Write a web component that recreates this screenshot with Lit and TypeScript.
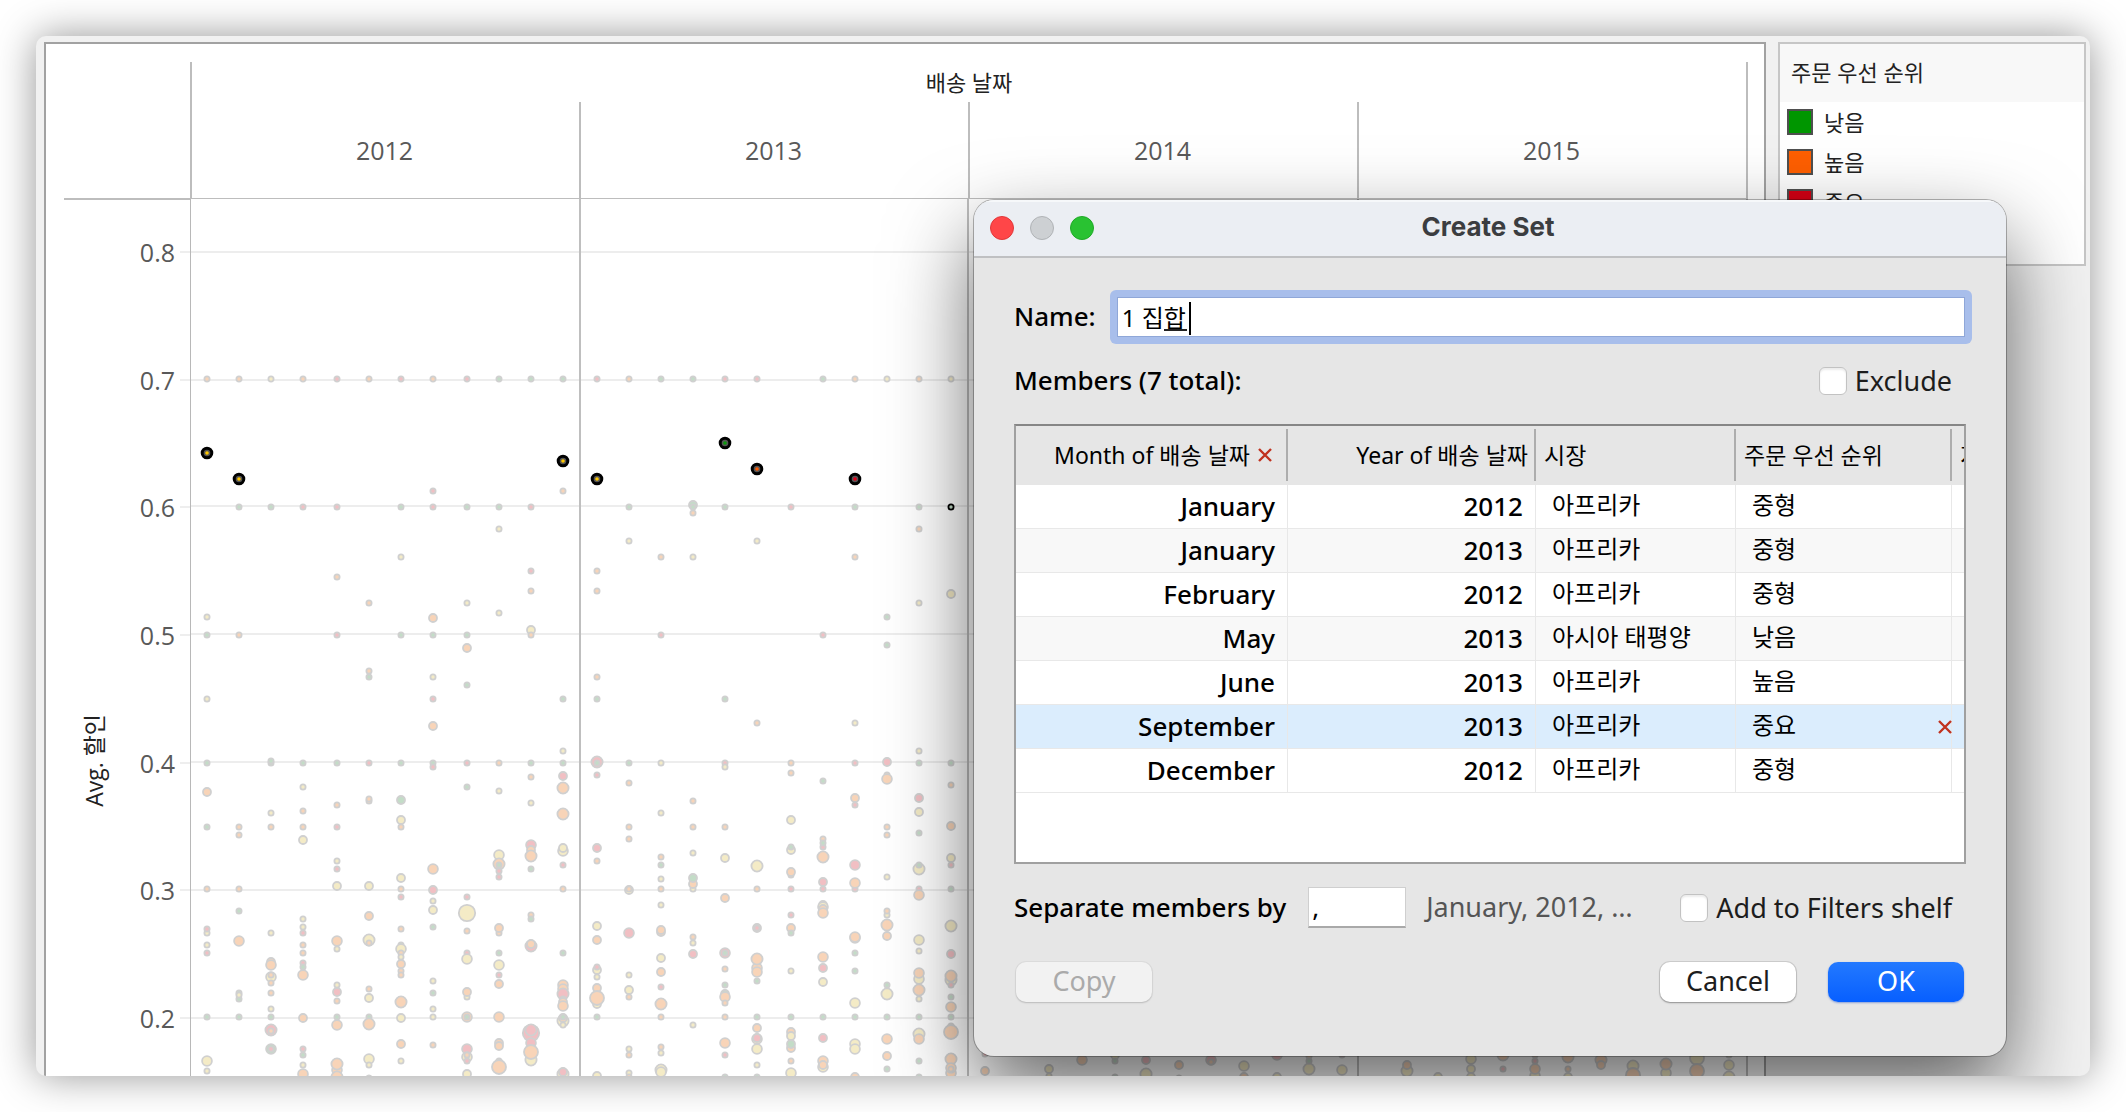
import { LitElement, html, svg, css } from "lit";
import { customElement, state } from "lit/decorators.js";
import { classMap } from "lit/directives/class-map.js";

const PLOT_WIDTH = 1558;
const PLOT_LEFT = 190;
const PLOT_TOP = 199;

const px = (x: number) => `${(((x - PLOT_LEFT) / PLOT_WIDTH) * 100).toFixed(3)}%`;
const py = (y: number) => y - PLOT_TOP;

const FILL: Record<string, string> = { g: "#c3dcc7", r: "#f1bfc3", o: "#f8d4b8", y: "#f4ebc6" };
const STRONG: Record<string, string> = { g: "#0c9a0c", r: "#e3001b", o: "#ff5a00", y: "#ffc800" };
const RADIUS: Record<string, number> = { a: 2.6, b: 4, c: 4.9, d: 5.6, e: 7, f: 8.2 };

/* Marks by month column: level, colour of the priority, size step. */
const MARKS: Record<number, string> = {
  207: "379o 617y 635g 699y 763g 792ob 827g 889o 933y 929r 945y 953r 1017g 1061yc 1071y",
  239: "379o 507g 635o 827o 835o 889o 911g 941oc 993g 999g 995y 1017g",
  271: "379y 507g 763g 761g 813y 827o 933y 962ob 965oc 977yc 975o 983o 993o 1009y 1017g 1030rd 1031o 1049gc 1049r",
  303: "379o 507r 763g 787y 811o 827o 840yb 919y 927y 933r 945o 953o 963r 967g 975oc 1018ob 1049r 1055g 1065y 1074oc",
  337: "379r 507r 577o 635r 763g 805o 827r 861y 869r 886yb 941oc 949y 985y 992rb 1001o 1017g 1025oc 1070oc 1064od 1077od",
  369: "379o 603o 671o 677g 763r 801o 799o 886yb 916ob 940yd 943o 989o 998yb 1017g 1024od 1059yc 1065y 1078y",
  401: "379r 507g 557y 635g 763g 800gb 820yb 827o 878yb 889o 897r 929o 945g 949yc 953o 957y 964ob 971o 975o 1002od 1018yb 1044ob 1061y",
  433: "379o 491r 507r 618ob 635g 677y 699r 726ob 763g 767r 869oc 890rb 901y 910yb 927g 981y 993g 1009y 1017y 1045o",
  467: "379r 507g 603y 635g 648ob 685g 763r 787g 897r 913yf 931o 953r 959yc 997y 992ob 1017oc 1017g 1049rc 1057yc 1055o 1061r 1074yb",
  499: "379g 507g 529y 613y 763o 791y 855yc 864od 865g 871r 877r 933o 928ob 953g 965yc 975r 984ob 1017oc 1043ob 1046ob 1061y 1067oe",
  531: "379g 507r 571r 591o 630yb 635o 763g 777o 803y 845rc 850ob 856od 869g 915o 919g 946rd 944ob 1033rf 1030rd 1043rc 1060yd 1052oe",
  563: "379g 491o 699g 751y 763g 776rb 788od 814od 851yc 848yb 865r 889o 953g 985oc 989oc 994rd 999o 1002ob 1006oc 1021yd 1018ob 1017g 1025y 1074yd 1072rb",
  597: "379r 571o 591o 677o 699g 762rd 763g 775r 848rb 861o 926yb 940ob 970yb 967r 977y 988ob 1004yb 998oe 1017g 1076yb",
  629: "379o 507g 541y 763g 783o 827o 839o 890yb 889o 933rc 975y 990yb 997o 1049y 1055o 1073y 1077o",
  661: "379g 557o 635r 763y 813y 857o 865g 879y 889o 905y 932ob 930ob 958yb 972ob 987r 1004od 1017o 1047o 1053y 1070yd 1072yc",
  693: "379g 505gb 507g 513o 557y 801o 827o 853y 889y 884ob 878gb 937o 943y 954rb 1025y",
  725: "379r 507g 699g 763r 767y 827o 858yb 898ob 953rc 953g 969o 985g 994gb 997oc 1003o 1017o 1043oc 1055r 1077g",
  757: "379r 541y 723o 866yd 889o 928yb 928r 968oc 959od 972oc 981g 1017g 1028ob 1039yc 1038rb 1049yc 1065y 1077g",
  791: "507r 763o 773o 820yb 850yb 847g 875o 872ob 889r 915r 928ob 933g 971y 1017g 1032ob 1036yb 1048ob 1044gb 1061o 1073yc",
  823: "379g 635r 781g 839o 847r 843g 857od 882rb 889r 905yb 907yc 909ob 913oc 957oc 968rb 982yb 1017g 1038rb 1061oc 1067yc 1065ob",
  855: "379o 507g 557o 723y 763r 798ob 805r 865rc 889r 883oc 938oc 937oc 953g 971g 1003yc 1017g 1044yc 1049yc 1077ob",
  887: "379y 617g 645g 762rb 775o 779oc 827o 835o 877y 915y 911o 925od 936ob 985g 994yd 1017g 1039oc 1056ob 1069g",
  919: "379o 507g 529o 603y 751y 763g 798rb 812yb 833g 869yd 865g 889r 895oc 940yc 951y 979yc 973oc 990od 999y 1017g 1034yd 1039oc 1061g 1077g",
  951: "379y 594yb 763g 785o 826ob 858yb 865r 889g 926yd 954rb 980yd 976od 985r 997g 1007oc 1017g 1026g 1032oe 1059od 1073oc 1068oc 1069o",
  985: "1054r 1071ob",
  1049: "1076y 1069yb",
  1082: "1060oc",
  1115: "1055yb 1061g 1077g",
  1146: "1060rb 1074yd",
  1179: "1065ob 1078g",
  1211: "1060rc 1062o",
  1244: "1077ob 1066yc",
  1277: "1055rc 1077yb",
  1309: "1056o 1069yd 1061g",
  1342: "1055r 1070yc",
  1407: "1071yd 1065ob",
  1438: "1077yb",
  1471: "1059yc 1077yb 1069yb",
  1503: "1055od 1069r",
  1535: "1055o 1061r 1076yc 1069oc",
  1568: "1057od 1069o 1077yb",
  1601: "1060od 1065ob",
  1633: "1066yd 1075oe",
  1666: "1073yc 1064od",
  1697: "1058ye 1071oe",
  1729: "1055y 1077yd 1065yc",
};

const SELECTED: [number, number, string][] = [
  [207, 453, "y"],
  [239, 479, "y"],
  [563, 461, "y"],
  [597, 479, "y"],
  [725, 443, "g"],
  [757, 469, "o"],
  [855, 479, "r"],
];

const GRID = [252, 380, 506, 634, 762, 890, 1018];
const TICKS = ["0.8", "0.7", "0.6", "0.5", "0.4", "0.3", "0.2"];
const YEARS = ["2012", "2013", "2014", "2015"];

const PRIORITIES = [
  { name: "낮음", tone: "low" },
  { name: "높음", tone: "high" },
  { name: "중요", tone: "critical" },
];

const MEMBERS = [
  ["January", "2012", "아프리카", "중형"],
  ["January", "2013", "아프리카", "중형"],
  ["February", "2012", "아프리카", "중형"],
  ["May", "2013", "아시아 태평양", "낮음"],
  ["June", "2013", "아프리카", "높음"],
  ["September", "2013", "아프리카", "중요"],
  ["December", "2012", "아프리카", "중형"],
];

const cross = html`<svg class="cross" width="14" height="14" viewBox="0 0 14 14" aria-hidden="true">
  <path d="M1 1L13 13M13 1L1 13" fill="none" stroke="#c0321f" stroke-width="2.4" />
</svg>`;

@customElement("scatter-plot")
export class ScatterPlot extends LitElement {
  static styles = css`
    :host {
      display: block;
      min-width: 0;
      min-height: 0;
      overflow: hidden;
    }
    .plot {
      display: block;
      width: 100%;
      height: 100%;
    }
  `;

  render() {
    return html`<svg class="plot" role="img" aria-label="Avg. 할인">
      ${GRID.map((y) => svg`<rect x="0" y=${py(y) - 1} width="99.9%" height="2" fill="#ededed"></rect>`)}
      <rect x="0" y="0" width="1" height="100%" fill="#b8b8b8"></rect>
      ${[579, 967, 1357, 1746].map((x) => svg`<rect x=${px(x)} y="0" width="2" height="100%" fill="#bfbfbf"></rect>`)}
      ${Object.entries(MARKS).map(([x, list]) =>
        list.split(" ").map((mark) => {
          const [, y, tone, size] = mark.match(/^(\d+)([groy])([a-f]?)$/)!;
          return svg`<circle cx=${px(+x)} cy=${py(+y)} r=${RADIUS[size || "a"]}
            fill=${FILL[tone]} stroke="#d0d0d0" stroke-width="1.8"></circle>`;
        })
      )}
      ${SELECTED.map(
        ([x, y, tone]) => svg`
          <circle cx=${px(x)} cy=${py(y)} r="4.8" fill="#555" stroke="#000" stroke-width="3"></circle>
          <circle cx=${px(x)} cy=${py(y)} r="1.8" fill=${STRONG[tone]}></circle>`
      )}
      <circle cx=${px(951)} cy=${py(507)} r="2.6" fill="#c3dcc7" stroke="#000" stroke-width="1.8"></circle>
    </svg>`;
  }
}

@customElement("create-set-dialog")
export class CreateSetDialog extends LitElement {
  static styles = css`
    :host {
      display: flex;
      flex-direction: column;
      box-sizing: border-box;
      border-radius: 20px;
      overflow: hidden;
      background: #e6e6e6;
      box-shadow: 0 0 0 1px rgba(0, 0, 0, 0.28), 0 36px 84px rgba(0, 0, 0, 0.6);
      font-family: "Noto Sans", "Noto Sans CJK KR", sans-serif;
      font-size: 26px;
      line-height: 36px;
      color: #000;
    }
    input,
    button {
      font: inherit;
      color: inherit;
      margin: 0;
      padding: 0;
      box-sizing: border-box;
      border: 0;
    }
    .titlebar {
      display: grid;
      grid-template-columns: 1fr auto 1fr;
      align-items: center;
      height: 58px;
      box-sizing: border-box;
      padding: 0 20px 0 16px;
      background: #ebeef3;
      border-bottom: 2px solid #bfc0c2;
      box-shadow: inset 0 2px 0 #f6f8fa;
    }
    .lights {
      display: flex;
      gap: 16px;
    }
    .light {
      width: 24px;
      height: 24px;
      border-radius: 50%;
    }
    .light.close {
      background: #ff4648;
      border: 1px solid #e0383a;
    }
    .light.minimize {
      background: #cdd0d3;
      border: 1px solid #b0b3b6;
    }
    .light.zoom {
      background: #29c232;
      border: 1px solid #1faa27;
    }
    .title {
      margin: 0;
      padding-bottom: 2px;
      font-family: Inter, sans-serif;
      font-size: 26px;
      font-weight: 700;
      line-height: 36px;
      color: #3b3d40;
    }
    .body {
      display: flex;
      flex-direction: column;
      padding: 32px 40px 54px;
    }
    .row {
      display: flex;
      align-items: center;
    }
    .name-row {
      gap: 14px;
      margin-right: -6px;
    }
    .name-box {
      position: relative;
      flex: 1;
      display: flex;
      padding: 8px;
      border-radius: 6px;
      background: #a8beeb;
    }
    .name-input {
      width: 100%;
      height: 38px;
      padding: 0 4px 2px;
      font-size: 24px;
      background: #fff;
      box-shadow: 0 0 0 1px #8fa7d8;
      outline: none;
    }
    .composing {
      position: absolute;
      left: 54px;
      top: 39px;
      width: 23px;
      height: 2px;
      background: #222;
    }
    .caret {
      position: absolute;
      left: 79px;
      top: 12px;
      width: 2px;
      height: 33px;
      background: #000;
    }
    .members-row {
      justify-content: space-between;
      margin-top: 18px;
      padding-right: 14px;
    }
    .check {
      display: flex;
      align-items: center;
      gap: 8px;
      font-size: 27px;
      color: #1d1d1d;
    }
    .box {
      appearance: none;
      width: 28px;
      height: 28px;
      border: 1px solid #c2c2c2;
      border-radius: 6px;
      background: #fff;
      box-shadow: inset 0 2px 2px rgba(0, 0, 0, 0.08);
    }
    .grid-box {
      height: 436px;
      margin-top: 24px;
      border: 2px solid #a0a0a0;
      border-top-color: #868686;
      background: #fff;
      overflow: hidden;
    }
    .grid {
      width: 100%;
      table-layout: fixed;
      border-collapse: separate;
      border-spacing: 0;
    }
    .col-month {
      width: 272px;
    }
    .col-year {
      width: 248px;
    }
    .col-market {
      width: 200px;
    }
    .col-priority {
      width: 216px;
    }
    th {
      height: 59px;
      box-sizing: border-box;
      padding: 0 8px 2px;
      font-size: 23px;
      font-weight: 400;
      text-align: left;
      white-space: nowrap;
      background: linear-gradient(#adadad, #adadad) right 3px / 2px 52px no-repeat #e6e6e6;
    }
    th.last {
      background: #e6e6e6;
      overflow: hidden;
      text-overflow: clip;
      padding-right: 0;
    }
    .num {
      text-align: right;
    }
    .head {
      display: inline-flex;
      align-items: center;
      gap: 8px;
    }
    .head-month {
      padding-right: 8px;
    }
    .remove {
      display: inline-flex;
      background: none;
    }
    td {
      position: relative;
      height: 44px;
      box-sizing: border-box;
      padding: 0 12px 2px 16px;
      font-weight: 500;
      white-space: nowrap;
      border-right: 1px solid #e8e8e8;
      border-bottom: 1px solid #e8e8e8;
    }
    td.korean {
      padding-bottom: 3px;
      font-size: 24px;
      font-weight: 400;
    }
    td:last-child {
      border-right: 0;
    }
    tr.alt td {
      background: #f8f8f8;
    }
    tr.current td {
      background: #dbedfd;
    }
    td .remove {
      position: absolute;
      right: -1px;
      top: 15px;
      z-index: 1;
    }
    .strong {
      padding-bottom: 2px;
      font-weight: 500;
    }
    .separator-row {
      margin-top: 23px;
      padding-right: 14px;
      white-space: nowrap;
    }
    .separator {
      width: 98px;
      height: 41px;
      margin-left: 22px;
      padding: 0 3px;
      border: 1px solid #cfcfcf;
      border-bottom: 2px solid #a9a9a9;
      background: #fff;
    }
    .sample {
      margin-left: 20px;
      padding-bottom: 2px;
      font-size: 27px;
      color: #555;
    }
    .push {
      margin-left: auto;
    }
    .actions {
      gap: 32px;
      margin-top: 34px;
      padding: 0 2px;
    }
    .action {
      width: 136px;
      height: 40px;
      padding-bottom: 3px;
      border-radius: 10px;
      background: #fff;
      font-size: 27px;
      color: #1d1d1d;
      box-shadow: 0 0 0 1px rgba(0, 0, 0, 0.1), 0 1px 2px rgba(0, 0, 0, 0.3);
    }
    .action:disabled {
      background: #f2f2f2;
      color: #aaa;
      box-shadow: 0 0 0 1px rgba(0, 0, 0, 0.04), 0 1px 2px rgba(0, 0, 0, 0.16);
    }
    .action.primary {
      background: linear-gradient(#2379ff, #075fff);
      color: #fff;
      box-shadow: 0 1px 2px rgba(0, 60, 200, 0.4);
    }
  `;

  @state() private current = 5;

  render() {
    return html`
      <header class="titlebar">
        <div class="lights">
          <button class="light close" aria-label="Close"></button>
          <button class="light minimize" aria-label="Minimize" disabled></button>
          <button class="light zoom" aria-label="Zoom"></button>
        </div>
        <h1 class="title">Create Set</h1>
      </header>
      <div class="body">
        <div class="row name-row">
          <label class="strong" for="name">Name:</label>
          <div class="name-box">
            <input class="name-input" id="name" type="text" .value=${"1 집합"} />
            <span class="composing"></span>
            <span class="caret"></span>
          </div>
        </div>
        <div class="row members-row">
          <span class="strong">Members (7 total):</span>
          <label class="check" for="exclude"><input class="box" id="exclude" type="checkbox" />Exclude</label>
        </div>
        <div class="grid-box">
          <table class="grid">
            <colgroup>
              <col class="col-month" />
              <col class="col-year" />
              <col class="col-market" />
              <col class="col-priority" />
              <col />
            </colgroup>
            <thead>
              <tr>
                <th class="num">
                  <span class="head head-month">Month of 배송 날짜
                    <button class="remove" aria-label="Remove column">${cross}</button></span>
                </th>
                <th class="num">Year of 배송 날짜</th>
                <th>시장</th>
                <th>주문 우선 순위</th>
                <th class="last">지역</th>
              </tr>
            </thead>
            <tbody>
              ${MEMBERS.map(
                ([month, year, market, priority], i) => html`
                  <tr
                    class=${classMap({ alt: i % 2 === 1, current: i === this.current })}
                    @click=${() => (this.current = i)}
                  >
                    <td class="num">${month}</td>
                    <td class="num">${year}</td>
                    <td class="korean">${market}</td>
                    <td class="korean">
                      ${priority}
                      ${i === this.current
                        ? html`<button class="remove" aria-label="Remove member">${cross}</button>`
                        : null}
                    </td>
                    <td></td>
                  </tr>
                `
              )}
            </tbody>
          </table>
        </div>
        <div class="row separator-row">
          <label class="strong" for="separator">Separate members by</label>
          <input class="separator" id="separator" type="text" .value=${","} />
          <span class="sample">January, 2012, …</span>
          <label class="check push" for="shelf"
            ><input class="box" id="shelf" type="checkbox" />Add to Filters shelf</label
          >
        </div>
        <div class="row actions">
          <button class="action" disabled>Copy</button>
          <button class="action push">Cancel</button>
          <button class="action primary">OK</button>
        </div>
      </div>
    `;
  }
}

@customElement("app-root")
export class AppRoot extends LitElement {
  static styles = css`
    :host {
      display: block;
      box-sizing: border-box;
      height: 100vh;
      padding: 36px;
      background: #fff;
      overflow: hidden;
      font-family: "Open Sans", "Noto Sans CJK KR", sans-serif;
      font-size: 22px;
      line-height: 32px;
      color: #222;
    }
    .window {
      position: relative;
      display: flex;
      gap: 12px;
      box-sizing: border-box;
      height: 100%;
      padding: 6px 4px 0 8px;
      border-radius: 10px;
      background: #f1f1f1;
      overflow: hidden;
      box-shadow: 0 0 40px rgba(0, 0, 0, 0.42);
    }
    .sheet {
      flex: 1;
      min-width: 0;
      display: grid;
      grid-template-columns: 126px minmax(0, 1fr);
      grid-template-rows: 137px minmax(0, 1fr);
      padding: 18px 16px 0 18px;
      border: 2px solid #a2a2a2;
      border-bottom: 0;
      background: #fff;
    }
    .corner {
      border-bottom: 2px solid #bdbdbd;
      margin-bottom: -1px;
    }
    .columns {
      display: flex;
      flex-direction: column;
      border: 2px solid #bdbdbd;
      border-top: 0;
      border-bottom-width: 1px;
    }
    .field {
      height: 40px;
      line-height: 40px;
      text-align: center;
    }
    .years {
      flex: 1;
      display: grid;
      grid-template-columns: repeat(4, 1fr);
      margin-left: -2px;
    }
    .year {
      display: flex;
      align-items: center;
      justify-content: center;
      padding-right: 2px;
      border-left: 2px solid #bdbdbd;
      font-size: 25px;
      color: #595959;
    }
    .axis {
      display: flex;
      justify-content: space-between;
      min-height: 0;
    }
    .axis-title {
      margin: 515px 0 0 14px;
      align-self: flex-start;
      writing-mode: vertical-rl;
      text-orientation: sideways;
      transform: rotate(180deg);
      font-size: 23px;
      white-space: nowrap;
    }
    .ticks {
      display: flex;
      flex-direction: column;
      justify-content: space-between;
      height: 798px;
      margin-top: 37px;
    }
    .tick {
      display: flex;
      align-items: center;
      gap: 5px;
      font-size: 25px;
      color: #595959;
    }
    .tick::after {
      content: "";
      width: 10px;
      height: 2px;
      background: #eee;
    }
    .legend {
      width: 304px;
      height: 220px;
      align-self: flex-start;
      border: 2px solid #c6c6c6;
      background: #fff;
    }
    .legend-title {
      margin: 0;
      padding: 0 11px 2px;
      font-size: 22px;
      font-weight: 400;
      line-height: 56px;
      background: #f8f8f8;
    }
    .legend-list {
      list-style: none;
      margin: 0;
      padding: 0 7px;
    }
    .legend-item {
      display: flex;
      align-items: center;
      gap: 11px;
      height: 40px;
    }
    .swatch {
      width: 22px;
      height: 22px;
      border: 2px solid #4f4f4f;
    }
    .low {
      background: #009600;
    }
    .high {
      background: #ff5f00;
    }
    .critical {
      background: #d50014;
    }
    .dialog {
      position: absolute;
      top: 164px;
      right: 84px;
      width: 1032px;
    }
  `;

  render() {
    return html`
      <div class="window">
        <section class="sheet">
          <div class="corner"></div>
          <div class="columns">
            <div class="field">배송 날짜</div>
            <div class="years">${YEARS.map((year) => html`<div class="year">${year}</div>`)}</div>
          </div>
          <div class="axis">
            <div class="axis-title">Avg. 할인</div>
            <div class="ticks">${TICKS.map((tick) => html`<div class="tick">${tick}</div>`)}</div>
          </div>
          <scatter-plot></scatter-plot>
        </section>
        <aside class="legend">
          <h2 class="legend-title">주문 우선 순위</h2>
          <ul class="legend-list">
            ${PRIORITIES.map(
              (item) => html`<li class="legend-item"><span class="swatch ${item.tone}"></span>${item.name}</li>`
            )}
          </ul>
        </aside>
        <create-set-dialog class="dialog" role="dialog" aria-label="Create Set"></create-set-dialog>
      </div>
    `;
  }
}
